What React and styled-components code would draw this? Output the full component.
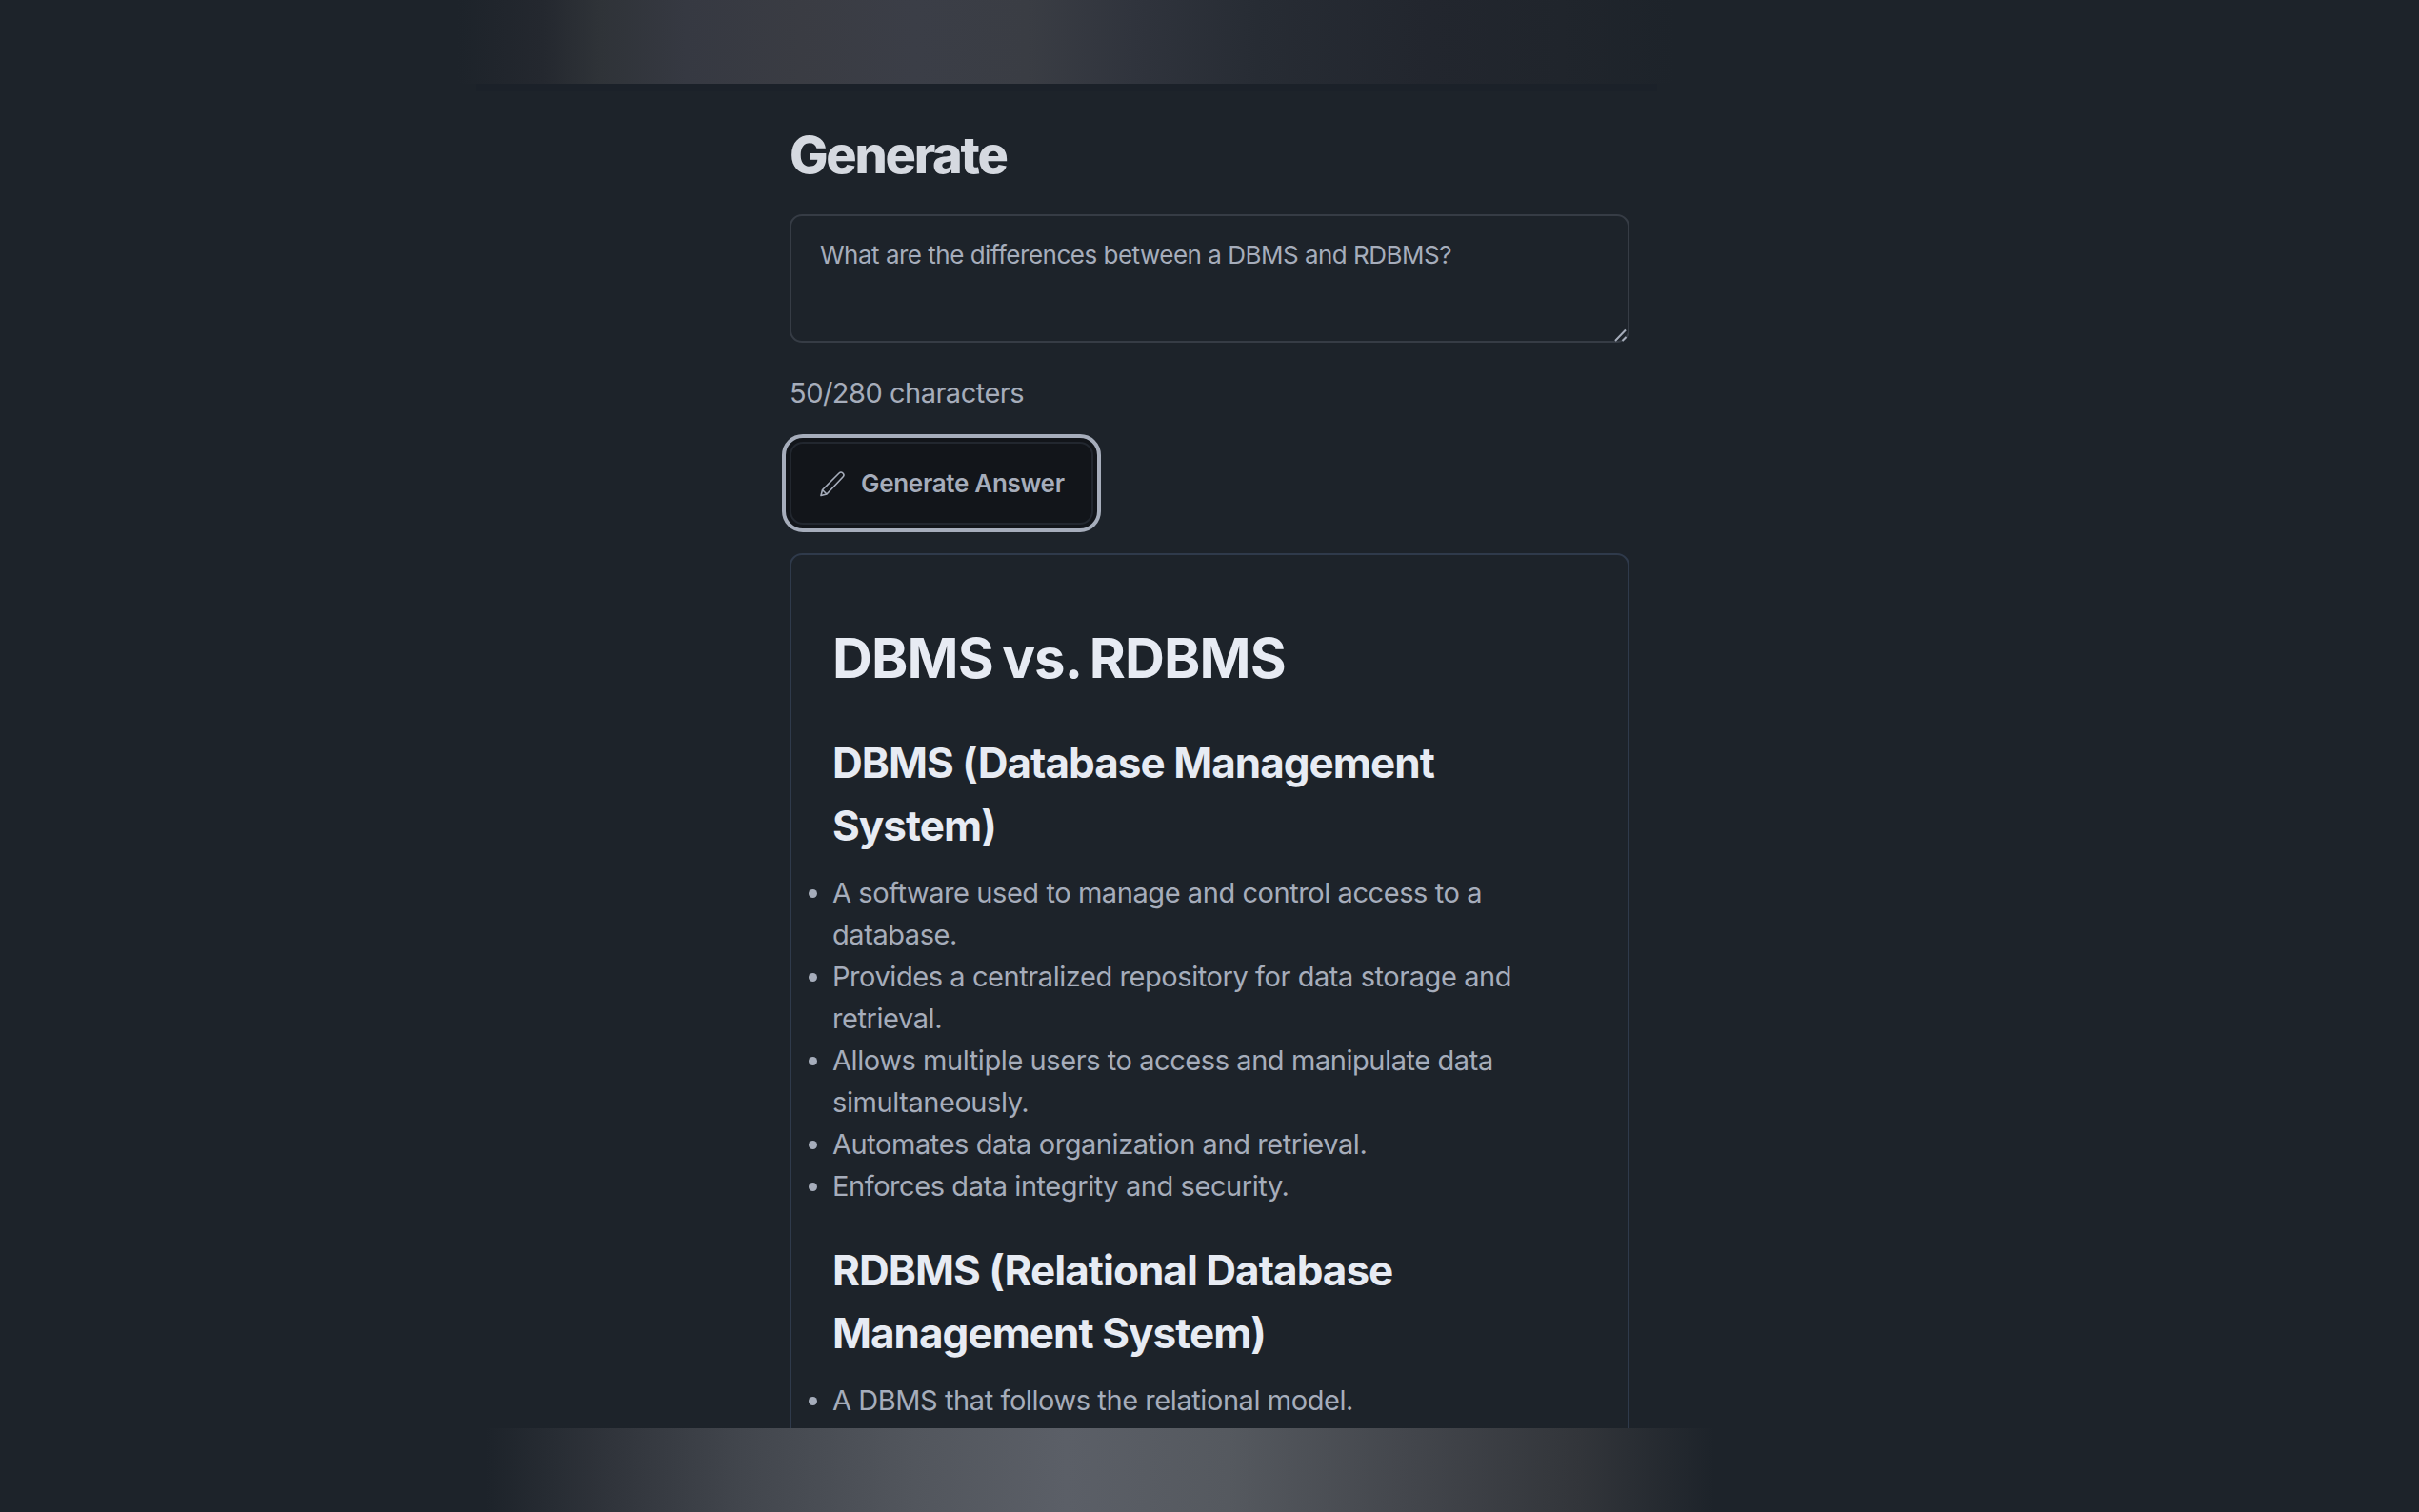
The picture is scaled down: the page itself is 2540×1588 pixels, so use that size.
import styled, { createGlobalStyle } from 'styled-components'

const GlobalStyle = createGlobalStyle`
  html, body {
    margin: 0;
    padding: 0;
    height: 100%;
    background: #1d232a;
    color-scheme: dark;
  }
  * { box-sizing: border-box; }
`

const Page = styled.div`
  height: 1588px;
  display: flex;
  flex-direction: column;
  overflow: hidden;
  font-family: Inter, "Liberation Sans", sans-serif;
  color: #a6adbb;
`
const TopGlow = styled.div`
  position: relative;
  flex: 0 0 88px;
  background: linear-gradient(90deg,
    #1d232a 480px, #24282f 570px, #2f3338 630px, #363942 720px,
    #3a3c43 840px, #3b3e47 960px, #3a3d44 1080px, #30343d 1190px, #272c34 1320px,
    #22262e 1500px, #20252c 1640px, #1d232a 1760px);

  &::after {
    content: '';
    position: absolute;
    top: 100%;
    left: 500px;
    width: 1240px;
    height: 8px;
    background: #1b2027;
    opacity: 0.35;
  }
`
const BottomGlow = styled.div`
  flex: 0 0 88px;
  background: linear-gradient(90deg,
    #1d232a 510px, #30343b 640px, #42464d 780px, #52565d 960px,
    #5b5f67 1120px, #55595f 1290px, #43464c 1480px, #32353a 1660px, #1d232a 1800px);
`
const Main = styled.main`
  flex: 1;
  min-height: 0;
  overflow: hidden;
`
const Column = styled.div`
  width: 882px;
  margin: 0 auto;
  padding-top: 40px;
`
const Title = styled.h1`
  margin: 0 0 27px;
  font-size: 54px;
  line-height: 70px;
  font-weight: 800;
  letter-spacing: -0.042em;
  color: #d5d9e0;
`
const PromptWrap = styled.div`
  position: relative;
  height: 135px;
`
const Prompt = styled.textarea`
  display: block;
  width: 100%;
  height: 100%;
  padding: 24px 30px;
  border: 2px solid #363c45;
  border-radius: 13px;
  outline: none;
  resize: none;
  background: #1d232a;
  color: #a6adbb;
  font: 400 26px/34px Inter, "Liberation Sans", sans-serif;
  letter-spacing: -0.5px;
`
const ResizeGrip = styled.svg`
  position: absolute;
  right: 2px;
  bottom: 1px;
  width: 14px;
  height: 14px;
  stroke: #a6adbb;
  stroke-width: 2;
`
const Counter = styled.p`
  margin: 33px 0 31px;
  font-size: 29px;
  line-height: 40px;
  letter-spacing: -0.5px;
  color: #a6adbb;
`
const GenerateButton = styled.button`
  display: flex;
  align-items: center;
  gap: 16px;
  width: 319px;
  height: 87px;
  padding: 0 0 0 29px;
  border: 2px solid #22272f;
  border-radius: 14px;
  outline: 4px solid #a6adbb;
  outline-offset: 4px;
  box-shadow: 0 0 0 4px #12151a;
  background: #12151a;
  color: #a6adbb;
  font: 600 26px/34px Inter, "Liberation Sans", sans-serif;
  letter-spacing: -0.3px;
`
const PenIcon = styled.svg`
  width: 28px;
  height: 28px;
  flex: none;
  fill: none;
  stroke: currentColor;
  stroke-width: 1.6;
  stroke-linejoin: round;
`
const AnswerCard = styled.section`
  margin-top: 30px;
  padding: 68px 43px 120px;
  border: 2px solid #2f3a4b;
  border-radius: 13px;
  background: #1d232a;
`
const AnswerTitle = styled.h1`
  margin: 0 0 37px;
  font-size: 58px;
  line-height: 80px;
  font-weight: 700;
  letter-spacing: -0.015em;
  word-spacing: -0.06em;
  color: #e7ebf3;
`
const SectionTitle = styled.h2`
  margin: 0 0 16px;
  font-size: 44px;
  line-height: 66px;
  font-weight: 700;
  letter-spacing: -0.022em;
  color: #e7ebf3;
`
const Points = styled.ul`
  margin: 0 0 33px;
  padding: 0;
  list-style: none;
`
const Point = styled.li`
  position: relative;
  font-size: 29px;
  line-height: 44px;
  letter-spacing: -0.43px;
  color: #a6adbb;

  &::before {
    content: '';
    position: absolute;
    left: -25px;
    top: 18px;
    width: 9px;
    height: 9px;
    border-radius: 50%;
    background: #a6adbb;
  }
`

const dbmsPoints = [
  'A software used to manage and control access to a database.',
  'Provides a centralized repository for data storage and retrieval.',
  'Allows multiple users to access and manipulate data simultaneously.',
  'Automates data organization and retrieval.',
  'Enforces data integrity and security.',
]

const App = () => {
  return (
    <Page>
      <GlobalStyle />
      <TopGlow />
      <Main>
        <Column>
          <Title>Generate</Title>
          <PromptWrap>
            <Prompt readOnly value="What are the differences between a DBMS and RDBMS?" />
            <ResizeGrip viewBox="0 0 14 14">
              <path d="M1 13 L12 1.5 M8.5 13 L12.5 9" />
            </ResizeGrip>
          </PromptWrap>
          <Counter>50/280 characters</Counter>
          <GenerateButton>
            <PenIcon viewBox="0 0 28 28">
              <path d="M2 26.5 L3.5 20.5 L21 3 a2.8 2.8 0 0 1 4 4 L8 25 Z" />
              <path d="M3.5 20.5 L8 25" />
            </PenIcon>
            Generate Answer
          </GenerateButton>
          <AnswerCard>
            <AnswerTitle>DBMS vs. RDBMS</AnswerTitle>
            <SectionTitle>DBMS (Database Management System)</SectionTitle>
            <Points>
              {dbmsPoints.map((text) => (
                <Point key={text}>{text}</Point>
              ))}
            </Points>
            <SectionTitle>RDBMS (Relational Database Management System)</SectionTitle>
            <Points>
              <Point>A DBMS that follows the relational model.</Point>
            </Points>
          </AnswerCard>
        </Column>
      </Main>
      <BottomGlow />
    </Page>
  )
}

export default App
